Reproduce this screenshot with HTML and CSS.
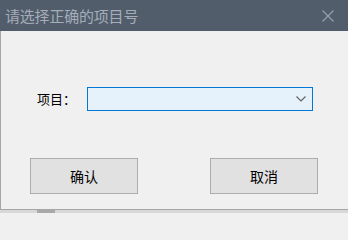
FILE: index.html
```html
<!DOCTYPE html>
<html lang="zh-CN">
<head>
<meta charset="utf-8">
<title>请选择正确的项目号</title>
<link rel="stylesheet" href="styles.css">
</head>
<body>
<div class="window">
  <div class="titlebar">
    <span class="title">请选择正确的项目号</span>
    <svg class="close" width="12" height="12" viewBox="0 0 12 12"><path d="M0.5 0.5 L11.5 11.5 M11.5 0.5 L0.5 11.5" stroke="#98a1ad" stroke-width="1.1" fill="none"/></svg>
  </div>
  <div class="content">
    <div class="form-row">
      <span class="label">项目：</span>
      <div class="combo">
        <svg class="chev" width="10" height="6" viewBox="0 0 10 6"><path d="M0.5 0.5 L5 5 L9.5 0.5" stroke="#606060" stroke-width="1.1" fill="none"/></svg>
      </div>
    </div>
    <div class="button-row">
      <button class="btn">确认</button>
      <button class="btn">取消</button>
    </div>
  </div>
  <div class="strip"><div class="strip-block"></div></div>
</div>
</body>
</html>
```
FILE: styles.css
```css
html, body {
  margin: 0;
  padding: 0;
  background: #f0f0f0;
}
.window {
  width: 348px;
  height: 213px;
  display: flex;
  flex-direction: column;
  font-family: "Noto Sans CJK SC", "Microsoft YaHei", sans-serif;
  overflow: hidden;
}
.titlebar {
  height: 31px;
  flex: none;
  background: #525d6c;
  display: flex;
  align-items: center;
  justify-content: space-between;
  padding: 0 14px 0 5px;
}
.title {
  color: #a4adb9;
  font-size: 15px;
  line-height: 31px;
  letter-spacing: -0.2px;
}
.close {
  display: block;
}
.content {
  height: 178px;
  flex: none;
  box-sizing: content-box;
  border-left: 1px solid #a6a6a6;
  border-bottom: 1px solid #a6a6a6;
  background: #f0f0f0;
  padding-top: 56px;
  box-sizing: border-box;
  height: 179px;
}
.form-row {
  display: flex;
  align-items: center;
  height: 24px;
  padding-left: 36px;
}
.label {
  width: 50px;
  font-size: 13px;
  color: #000;
  line-height: 24px;
}
.combo {
  width: 226px;
  height: 24px;
  box-sizing: border-box;
  border: 1px solid #0078d7;
  background: #e5f1fb;
  display: flex;
  align-items: center;
  justify-content: flex-end;
  padding-right: 6px;
}
.chev {
  display: block;
}
.button-row {
  display: flex;
  gap: 72px;
  padding-left: 29px;
  margin-top: 47px;
}
.btn {
  width: 108px;
  height: 36px;
  box-sizing: border-box;
  border: 1px solid #adadad;
  background: #e1e1e1;
  font-family: "Noto Sans CJK SC", "Microsoft YaHei", sans-serif;
  font-size: 14px;
  color: #000;
  padding: 0;
  margin: 0;
}
.strip {
  height: 3px;
  flex: none;
  background: #d8d8d8;
  display: flex;
}
.strip-block {
  width: 18px;
  margin-left: 37px;
  background: #a9a9a9;
}
```
